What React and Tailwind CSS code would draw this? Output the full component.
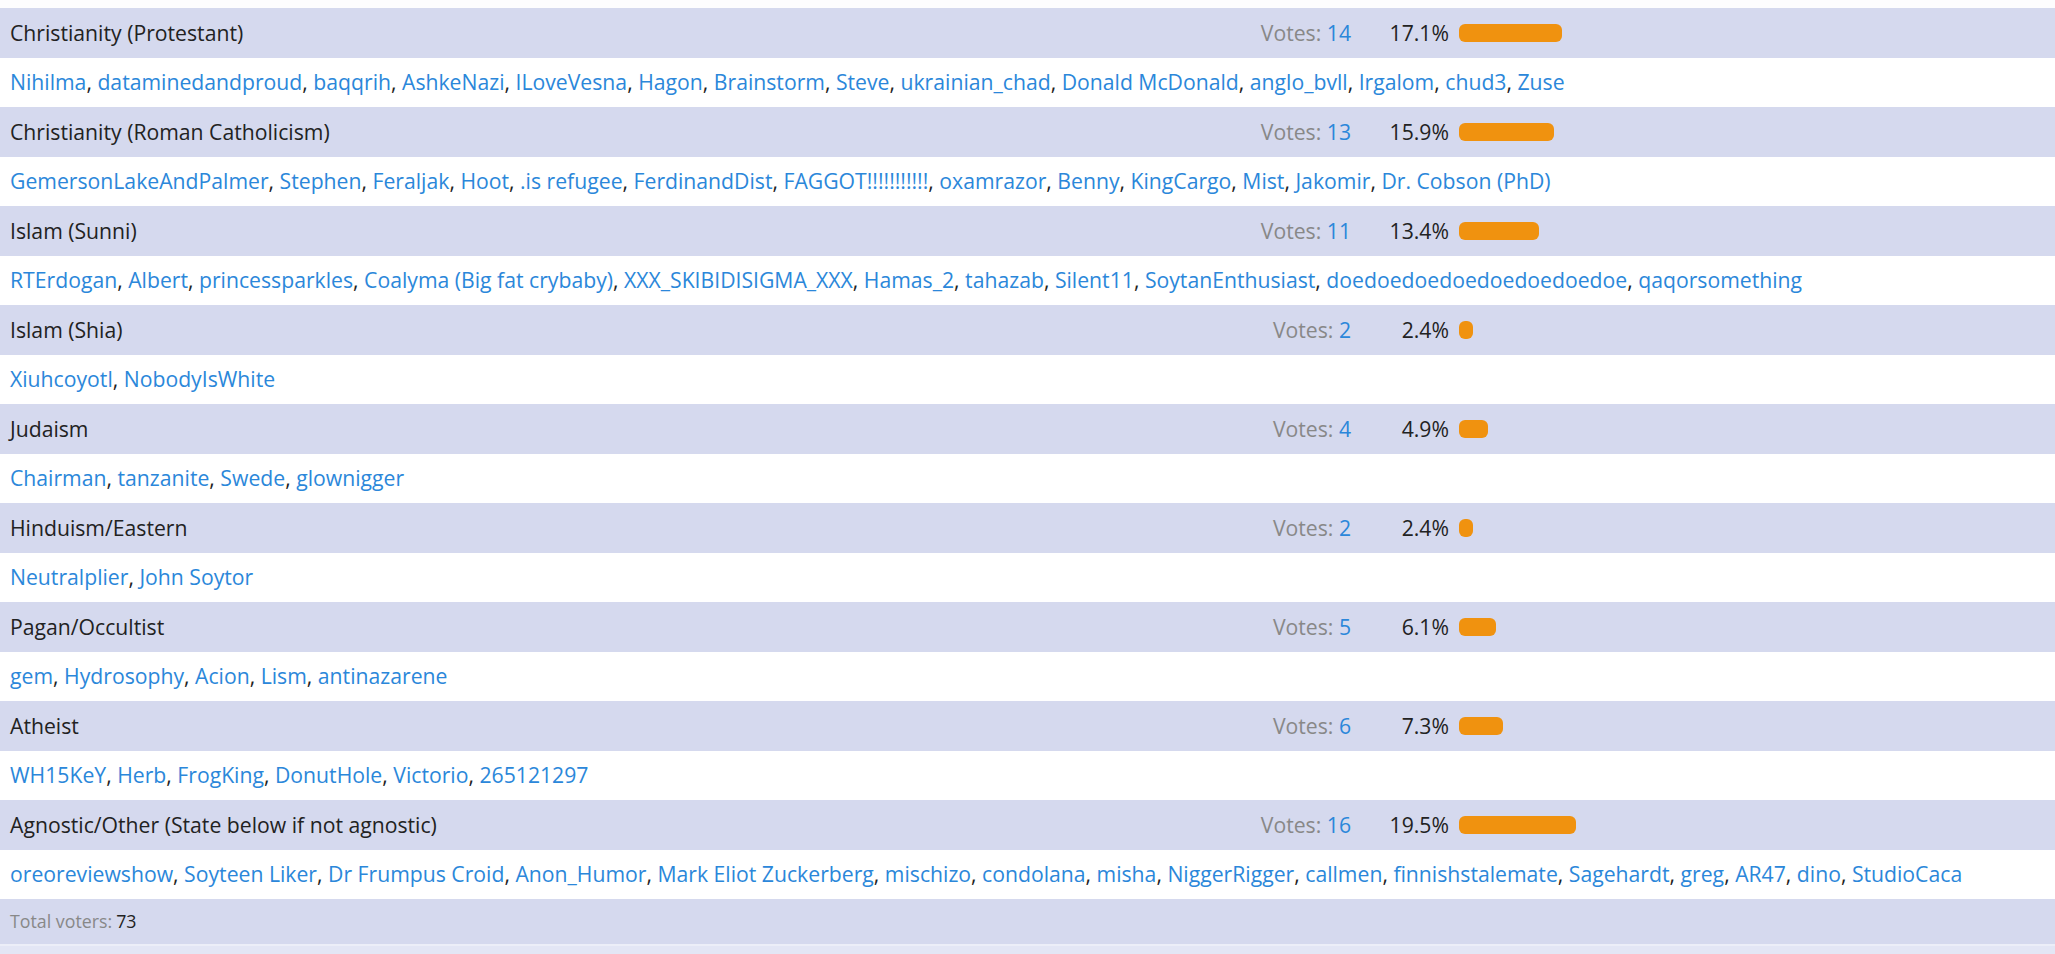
const options = [
  {
    name: "Christianity (Protestant)",
    votes: 14,
    pct: 17.1,
    voters: ["Nihilma", "dataminedandproud", "baqqrih", "AshkeNazi", "ILoveVesna", "Hagon", "Brainstorm", "Steve", "ukrainian_chad", "Donald McDonald", "anglo_bvll", "Irgalom", "chud3", "Zuse"],
  },
  {
    name: "Christianity (Roman Catholicism)",
    votes: 13,
    pct: 15.9,
    voters: ["GemersonLakeAndPalmer", "Stephen", "Feraljak", "Hoot", ".is refugee", "FerdinandDist", "FAGGOT!!!!!!!!!!!", "oxamrazor", "Benny", "KingCargo", "Mist", "Jakomir", "Dr. Cobson (PhD)"],
  },
  {
    name: "Islam (Sunni)",
    votes: 11,
    pct: 13.4,
    voters: ["RTErdogan", "Albert", "princessparkles", "Coalyma (Big fat crybaby)", "XXX_SKIBIDISIGMA_XXX", "Hamas_2", "tahazab", "Silent11", "SoytanEnthusiast", "doedoedoedoedoedoedoedoe", "qaqorsomething"],
  },
  {
    name: "Islam (Shia)",
    votes: 2,
    pct: 2.4,
    voters: ["Xiuhcoyotl", "NobodyIsWhite"],
  },
  {
    name: "Judaism",
    votes: 4,
    pct: 4.9,
    voters: ["Chairman", "tanzanite", "Swede", "glownigger"],
  },
  {
    name: "Hinduism/Eastern",
    votes: 2,
    pct: 2.4,
    voters: ["Neutralplier", "John Soytor"],
  },
  {
    name: "Pagan/Occultist",
    votes: 5,
    pct: 6.1,
    voters: ["gem", "Hydrosophy", "Acion", "Lism", "antinazarene"],
  },
  {
    name: "Atheist",
    votes: 6,
    pct: 7.3,
    voters: ["WH15KeY", "Herb", "FrogKing", "DonutHole", "Victorio", "265121297"],
  },
  {
    name: "Agnostic/Other (State below if not agnostic)",
    votes: 16,
    pct: 19.5,
    voters: ["oreoreviewshow", "Soyteen Liker", "Dr Frumpus Croid", "Anon_Humor", "Mark Eliot Zuckerberg", "mischizo", "condolana", "misha", "NiggerRigger", "callmen", "finnishstalemate", "Sagehardt", "greg", "AR47", "dino", "StudioCaca"],
  },
];

export default function App() {
  return (
    <div className="min-h-[954px] bg-[#e3e6f5] font-['Segoe_UI','Open_Sans',sans-serif] text-[21.2px] text-[#222]">
      <div className="h-[8px] bg-[#fdfdfe]" />
      {options.map((opt) => (
        <div key={opt.name}>
          {/* option row */}
          <div className="flex h-[49.5px] items-center bg-[#d5d9ee]">
            <div className="flex-1 pl-[10px] whitespace-nowrap">{opt.name}</div>
            <div className="whitespace-nowrap text-right">
              <span className="text-[#888]">Votes: </span>
              <span className="text-[#2b87da]">{opt.votes}</span>
            </div>
            <div className="w-[98px] text-right">{opt.pct}%</div>
            <div className="w-[606px] pl-[10px]">
              <div
                className="h-[18px] rounded-[6px] bg-[#f0920f]"
                style={{ width: `${opt.pct * 6}px` }}
              />
            </div>
          </div>
          {/* voters row */}
          <div className="flex h-[49.5px] items-center bg-white pl-[10px] whitespace-nowrap">
            {opt.voters.map((v, i) => (
              <span key={i} className="whitespace-pre">
                <a className="text-[#2b87da]">{v}</a>
                {i < opt.voters.length - 1 ? ", " : ""}
              </span>
            ))}
          </div>
        </div>
      ))}
      <div className="flex h-[47px] items-center border-b-2 border-[#eceef8] bg-[#d5d9ee] pl-[10px] text-[17.8px]">
        <span className="text-[#888]">Total voters: </span>
        <span className="ml-[4px]">73</span>
      </div>
    </div>
  );
}
